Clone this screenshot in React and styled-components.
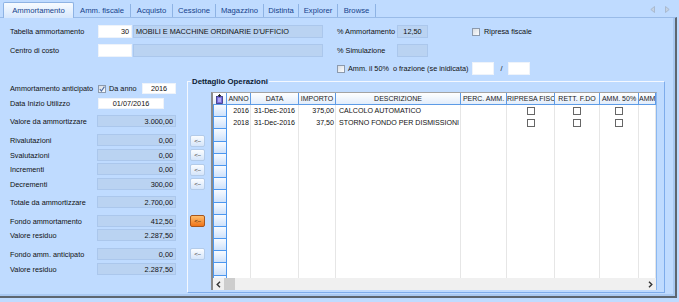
import React from 'react';
import styled, { createGlobalStyle, css } from 'styled-components';

const GlobalStyle = createGlobalStyle`
  *, *::before, *::after { box-sizing: border-box; }
  html, body { margin: 0; padding: 0; background: #bfdbff; }
  body { font-family: "Liberation Sans", Arial, sans-serif; color: #111; }
`;

const Screen = styled.div`
  width: 679px;
  height: 302px;
  overflow: hidden;
  background: #bfdbff;
  display: flex;
  flex-direction: column;
`;

const TabBar = styled.div`
  flex: none;
  height: 17px;
  display: flex;
  align-items: flex-end;
  padding-left: 3px;
`;

const Tab = styled.div`
  width: ${p => p.$w}px;
  height: 13px;
  display: flex;
  align-items: center;
  justify-content: center;
  font-size: 7.7px;
  color: #15428b;
  white-space: nowrap;
  border-right: 1px solid #8eb3e4;
  ${p => p.$active && css`
    height: 16px;
    margin-bottom: -1px;
    background: linear-gradient(#f7fbff, #d6e7fd);
    border: 1px solid #8eb3e4;
    border-bottom: none;
    border-radius: 2px 2px 0 0;
    position: relative;
    z-index: 1;
  `}
`;

const NavArrows = styled.div`
  margin-left: auto;
  align-self: center;
  display: flex;
  gap: 10px;
  padding-right: 9px;
  padding-top: 2px;
`;

const TabPage = styled.div`
  flex: none;
  width: 677px;
  height: 281px;
  border-top: 1px solid #99bbe8;
  border-right: 2px solid #5d6670;
  border-bottom: 2px solid #5d6670;
  box-shadow: inset -2px -2px 0 #a9c9f2;
  display: flex;
  flex-direction: column;
`;

const TopSection = styled.div`
  display: flex;
  padding-top: 7px;
`;

const TopLeft = styled.div`
  width: 337px;
  padding-left: 10px;
  display: grid;
  grid-template-columns: 88px 35px 191px;
  grid-template-rows: 13px 13px 13px;
  row-gap: 5.5px;
  align-items: center;
`;

const TopRight = styled.div`
  display: grid;
  grid-template-columns: 60px 31px 1fr;
  grid-template-rows: 13px 13px 13px;
  row-gap: 5.5px;
  align-items: center;
`;

const Label = styled.span`
  font-size: 7.3px;
  color: #111;
  white-space: pre;
  margin-left: ${p => p.$ml || 0}px;
`;

const WhiteBox = styled.div`
  width: ${p => p.$w}px;
  height: ${p => p.$h || 13}px;
  background: #fff;
  border: 1px solid #eef3fa;
  font-size: 7.3px;
  color: #111;
  display: flex;
  align-items: center;
  justify-content: ${p => p.$align || 'flex-end'};
  padding: 0 2px;
  white-space: nowrap;
  margin-left: ${p => (p.$push ? 'auto' : `${p.$ml || 0}px`)};
`;

const ReadBox = styled.div`
  width: ${p => p.$w}px;
  height: ${p => p.$h || 12}px;
  background: #bad3f2;
  border: 1px solid #abc7ec;
  font-size: 7.3px;
  color: #111;
  display: flex;
  align-items: center;
  justify-content: ${p => p.$align || 'flex-end'};
  padding: 0 2px;
  white-space: nowrap;
  overflow: hidden;
`;

const CheckField = styled.div`
  display: flex;
  align-items: center;
  gap: ${p => p.$gap || 4}px;
  margin-left: ${p => p.$ml || 0}px;
  grid-column: ${p => (p.$span ? '1 / -1' : 'auto')};
`;

const CheckBox = styled.span`
  flex: none;
  width: 8px;
  height: 8px;
  border: 1px solid #8c9aad;
  background: linear-gradient(135deg, #d9dde3, #fbfcfd);
  display: inline-flex;
  align-items: center;
  justify-content: center;
`;

const Slash = styled.span`
  font-size: 7.3px;
  width: 8px;
  text-align: center;
`;

const BottomSection = styled.div`
  flex: 1;
  display: flex;
  align-items: flex-start;
`;

const LeftCol = styled.div`
  width: 187px;
  padding-left: 10px;
  display: flex;
  flex-direction: column;
`;

const FieldRow = styled.div`
  width: 166px;
  height: ${p => p.$h || 12}px;
  margin-top: ${p => p.$mt}px;
  display: flex;
  align-items: center;
`;

const RowLabel = styled(Label)`
  width: ${p => p.$w || 87}px;
  flex: none;
`;

const GroupBox = styled.div`
  position: relative;
  margin-top: 6px;
  width: 478px;
  height: 212px;
  border: 1px solid;
  border-color: #f4f8ff #7eaceb #7eaceb #f4f8ff;
  display: flex;
  padding-left: 2px;
`;

const Legend = styled.span`
  position: absolute;
  top: -5px;
  left: 3px;
  padding: 0 1px;
  background: #bfdbff;
  font-size: 7.8px;
  font-weight: bold;
  color: #0b1a33;
  line-height: 9px;
  white-space: nowrap;
`;

const ButtonCol = styled.div`
  width: 15px;
  display: flex;
  flex-direction: column;
`;

const ArrowButton = styled.div`
  width: 15px;
  height: 12px;
  margin-top: ${p => p.$mt}px;
  border: 1px solid #b3cbe9;
  border-radius: 2px;
  background: linear-gradient(#fbfdff, #d5e5fa);
  font-size: 6px;
  color: #333;
  display: flex;
  align-items: center;
  justify-content: center;
  letter-spacing: -0.3px;
  ${p => p.$hot && css`
    border-color: #a5561f;
    background: linear-gradient(#ffbd6c, #ef7418);
    color: #3a1a00;
  `}
`;

const Grid = styled.div`
  margin-top: 10px;
  margin-left: 6px;
  width: 446px;
  height: 198px;
  background: #fff;
  border-left: 2px solid #8a8a8a;
  border-top: 1px solid #a3a3a3;
  border-right: 1px solid #8cb8f0;
  display: flex;
  flex-direction: column;
  overflow: hidden;
`;

const GridHeader = styled.div`
  display: flex;
  flex: none;
  height: 12px;
`;

const HeaderCell = styled.div`
  width: ${p => p.$w}px;
  flex: none;
  height: 12px;
  border-right: 1px solid #5d9be6;
  border-bottom: 1px solid #5d9be6;
  background: linear-gradient(#ffffff, #e2edfb);
  font-size: 7px;
  line-height: 11px;
  color: #222;
  text-align: center;
  white-space: nowrap;
  overflow: hidden;
`;

const IndicatorHead = styled.div`
  width: 14px;
  flex: none;
  height: 12px;
  border-right: 1px solid #5d9be6;
  border-bottom: 1px solid #5d9be6;
  background: linear-gradient(#ffffff, #e2edfb);
  display: flex;
  align-items: center;
  justify-content: center;
`;

const GridBody = styled.div`
  flex: 1;
  overflow: hidden;
`;

const GridRow = styled.div`
  display: flex;
  height: 12.2px;
`;

const Indicator = styled.div`
  width: 14px;
  flex: none;
  border: 1px solid #4d97ee;
  border-top: none;
  background: linear-gradient(#f8fbff, #cfe2fb);
`;

const Cell = styled.div`
  width: ${p => p.$w}px;
  flex: none;
  border-right: 1px solid #e6e6e6;
  font-size: 7.1px;
  color: #111;
  line-height: 12px;
  padding: 0 1px;
  white-space: nowrap;
  overflow: hidden;
  display: flex;
  align-items: center;
  justify-content: ${p => (p.$align === 'right' ? 'flex-end' : p.$align === 'center' ? 'center' : 'flex-start')};
  padding-left: ${p => (p.$align === 'left' ? 3 : 1)}px;
`;

const GridCheck = styled.span`
  width: 8px;
  height: 8px;
  border: 1px solid #666;
  background: #fff;
`;

const ScrollBar = styled.div`
  flex: none;
  height: 12px;
  background: #f0f0f0;
  display: flex;
  align-items: center;
`;

const ScrollArrow = styled.div`
  width: 11px;
  height: 12px;
  display: flex;
  align-items: center;
  justify-content: center;
`;

const ScrollThumb = styled.div`
  width: 11px;
  height: 12px;
  background: #cdcdcd;
`;

const Spacer = styled.div`
  flex: 1;
`;

const tabs = [
  ['Ammortamento', 71],
  ['Amm. fiscale', 57],
  ['Acquisto', 42],
  ['Cessione', 43],
  ['Magazzino', 48],
  ['Distinta', 35],
  ['Explorer', 39],
  ['Browse', 38],
];

const leftRows = [
  { label: 'Valore da ammortizzare', value: '3.000,00', mt: 6 },
  { label: 'Rivalutazioni', value: '0,00', mt: 7 },
  { label: 'Svalutazioni', value: '0,00', mt: 3 },
  { label: 'Incrementi', value: '0,00', mt: 2 },
  { label: 'Decrementi', value: '300,00', mt: 3 },
  { label: 'Totale da ammortizzare', value: '2.700,00', mt: 6 },
  { label: 'Fondo ammortamento', value: '412,50', mt: 7 },
  { label: 'Valore residuo', value: '2.287,50', mt: 2 },
  { label: 'Fondo amm. anticipato', value: '0,00', mt: 7 },
  { label: 'Valore residuo', value: '2.287,50', mt: 3 },
];

const buttons = [
  { mt: 53 }, { mt: 2 }, { mt: 3 }, { mt: 2 }, { mt: 25, hot: true }, { mt: 21 },
];

const columns = [
  { key: 'anno', label: 'ANNO', w: 24, align: 'right' },
  { key: 'data', label: 'DATA', w: 48, align: 'center' },
  { key: 'importo', label: 'IMPORTO', w: 37, align: 'right' },
  { key: 'descr', label: 'DESCRIZIONE', w: 125, align: 'left' },
  { key: 'perc', label: 'PERC. AMM.', w: 46, align: 'right' },
  { key: 'ripresa', label: 'RIPRESA FISCALE', w: 48, check: true },
  { key: 'rett', label: 'RETT. F.DO', w: 45, check: true },
  { key: 'amm50', label: 'AMM. 50%', w: 39, check: true },
  { key: 'ammant', label: 'AMM. ANTICIPATO', w: 17, align: 'left' },
];

const dataRows = [
  { anno: '2016', data: '31-Dec-2016', importo: '375,00', descr: 'CALCOLO AUTOMATICO' },
  { anno: '2018', data: '31-Dec-2016', importo: '37,50', descr: 'STORNO FONDO PER DISMISSIONI' },
];

const TriangleIcon = ({ dir }) => (
  <svg width="5" height="7" viewBox="0 0 5 7">
    {dir === 'left'
      ? <path d="M4.5 0.5 L0.8 3.5 L4.5 6.5 Z" fill="#c5d2e2" stroke="#a3b3c7" strokeWidth="0.8" />
      : <path d="M0.5 0.5 L4.2 3.5 L0.5 6.5 Z" fill="#c5d2e2" stroke="#a3b3c7" strokeWidth="0.8" />}
  </svg>
);

const CheckMark = () => (
  <svg width="6" height="6" viewBox="0 0 6 6">
    <path d="M0.8 3 L2.4 5 L5.4 0.6" fill="none" stroke="#4a6aa0" strokeWidth="1.1" />
  </svg>
);

const ChevronIcon = ({ dir }) => (
  <svg width="5" height="7" viewBox="0 0 5 7">
    <path d={dir === 'left' ? 'M4 0.8 L1.2 3.5 L4 6.2' : 'M1 0.8 L3.8 3.5 L1 6.2'} fill="none" stroke="#333" strokeWidth="1.4" />
  </svg>
);

const GridIcon = () => (
  <svg width="9" height="10" viewBox="0 0 9 10">
    <rect x="1.5" y="2.5" width="6" height="7" fill="#7a6be0" stroke="#30307a" strokeWidth="0.8" />
    <rect x="3" y="4.5" width="3" height="1" fill="#e8e4ff" />
    <rect x="3" y="6.5" width="3" height="1" fill="#e8e4ff" />
    <path d="M4.5 0 L4.5 3 M3 1.5 L6 1.5" stroke="#202020" strokeWidth="0.9" />
  </svg>
);

export default function App() {
  const emptyRows = Array.from({ length: 14 });
  return (
    <>
      <GlobalStyle />
      <Screen>
        <TabBar>
          {tabs.map(([name, w], i) => (
            <Tab key={name} $w={w} $active={i === 0}>{name}</Tab>
          ))}
          <NavArrows>
            <TriangleIcon dir="left" />
            <TriangleIcon dir="right" />
          </NavArrows>
        </TabBar>
        <TabPage>
          <TopSection>
            <TopLeft>
              <Label>Tabella ammortamento</Label>
              <WhiteBox $w={34}>30</WhiteBox>
              <ReadBox $w={190} $h={13} $align="flex-start">MOBILI E MACCHINE ORDINARIE D'UFFICIO</ReadBox>
              <Label>Centro di costo</Label>
              <WhiteBox $w={34} />
              <ReadBox $w={190} $h={13} />
            </TopLeft>
            <TopRight>
              <Label>% Ammortamento</Label>
              <ReadBox $w={31} $h={13} $align="center">12,50</ReadBox>
              <CheckField $ml={44}>
                <CheckBox />
                <Label>Ripresa fiscale</Label>
              </CheckField>
              <Label>% Simulazione</Label>
              <ReadBox $w={31} $h={13} />
              <span />
              <CheckField $span $gap={3}>
                <CheckBox />
                <Label>Amm. il 50%  o frazione (se inidicata)</Label>
                <WhiteBox $w={22} $ml={1} />
                <Slash>/</Slash>
                <WhiteBox $w={22} />
              </CheckField>
            </TopRight>
          </TopSection>
          <BottomSection>
            <LeftCol>
              <FieldRow $mt={8} $h={11}>
                <RowLabel $w={88}>Ammortamento anticipato</RowLabel>
                <CheckBox><CheckMark /></CheckBox>
                <Label $ml={3}>Da anno</Label>
                <WhiteBox $w={34} $h={11} $align="center" $push>2016</WhiteBox>
              </FieldRow>
              <FieldRow $mt={4} $h={11}>
                <RowLabel $w={88}>Data Inizio Utilizzo</RowLabel>
                <WhiteBox $w={66} $h={11} $align="center">01/07/2016</WhiteBox>
              </FieldRow>
              {leftRows.map((r, i) => (
                <FieldRow key={i} $mt={r.mt}>
                  <RowLabel>{r.label}</RowLabel>
                  <ReadBox $w={79}>{r.value}</ReadBox>
                </FieldRow>
              ))}
            </LeftCol>
            <GroupBox>
              <Legend>Dettaglio Operazioni</Legend>
              <ButtonCol>
                {buttons.map((b, i) => (
                  <ArrowButton key={i} $mt={b.mt} $hot={b.hot}>{'<--'}</ArrowButton>
                ))}
              </ButtonCol>
              <Grid>
                <GridHeader>
                  <IndicatorHead><GridIcon /></IndicatorHead>
                  {columns.map(c => (
                    <HeaderCell key={c.key} $w={c.w}>{c.label}</HeaderCell>
                  ))}
                </GridHeader>
                <GridBody>
                  {dataRows.map((r, ri) => (
                    <GridRow key={ri}>
                      <Indicator />
                      {columns.map(c => (
                        <Cell key={c.key} $w={c.w} $align={c.check ? 'center' : c.align}>
                          {c.check ? <GridCheck /> : r[c.key] || ''}
                        </Cell>
                      ))}
                    </GridRow>
                  ))}
                  {emptyRows.map((_, ri) => (
                    <GridRow key={'e' + ri}>
                      <Indicator />
                      {columns.map(c => (
                        <Cell key={c.key} $w={c.w} />
                      ))}
                    </GridRow>
                  ))}
                </GridBody>
                <ScrollBar>
                  <ScrollArrow><ChevronIcon dir="left" /></ScrollArrow>
                  <ScrollThumb />
                  <Spacer />
                  <ScrollArrow><ChevronIcon dir="right" /></ScrollArrow>
                </ScrollBar>
              </Grid>
            </GroupBox>
          </BottomSection>
        </TabPage>
      </Screen>
    </>
  );
}
